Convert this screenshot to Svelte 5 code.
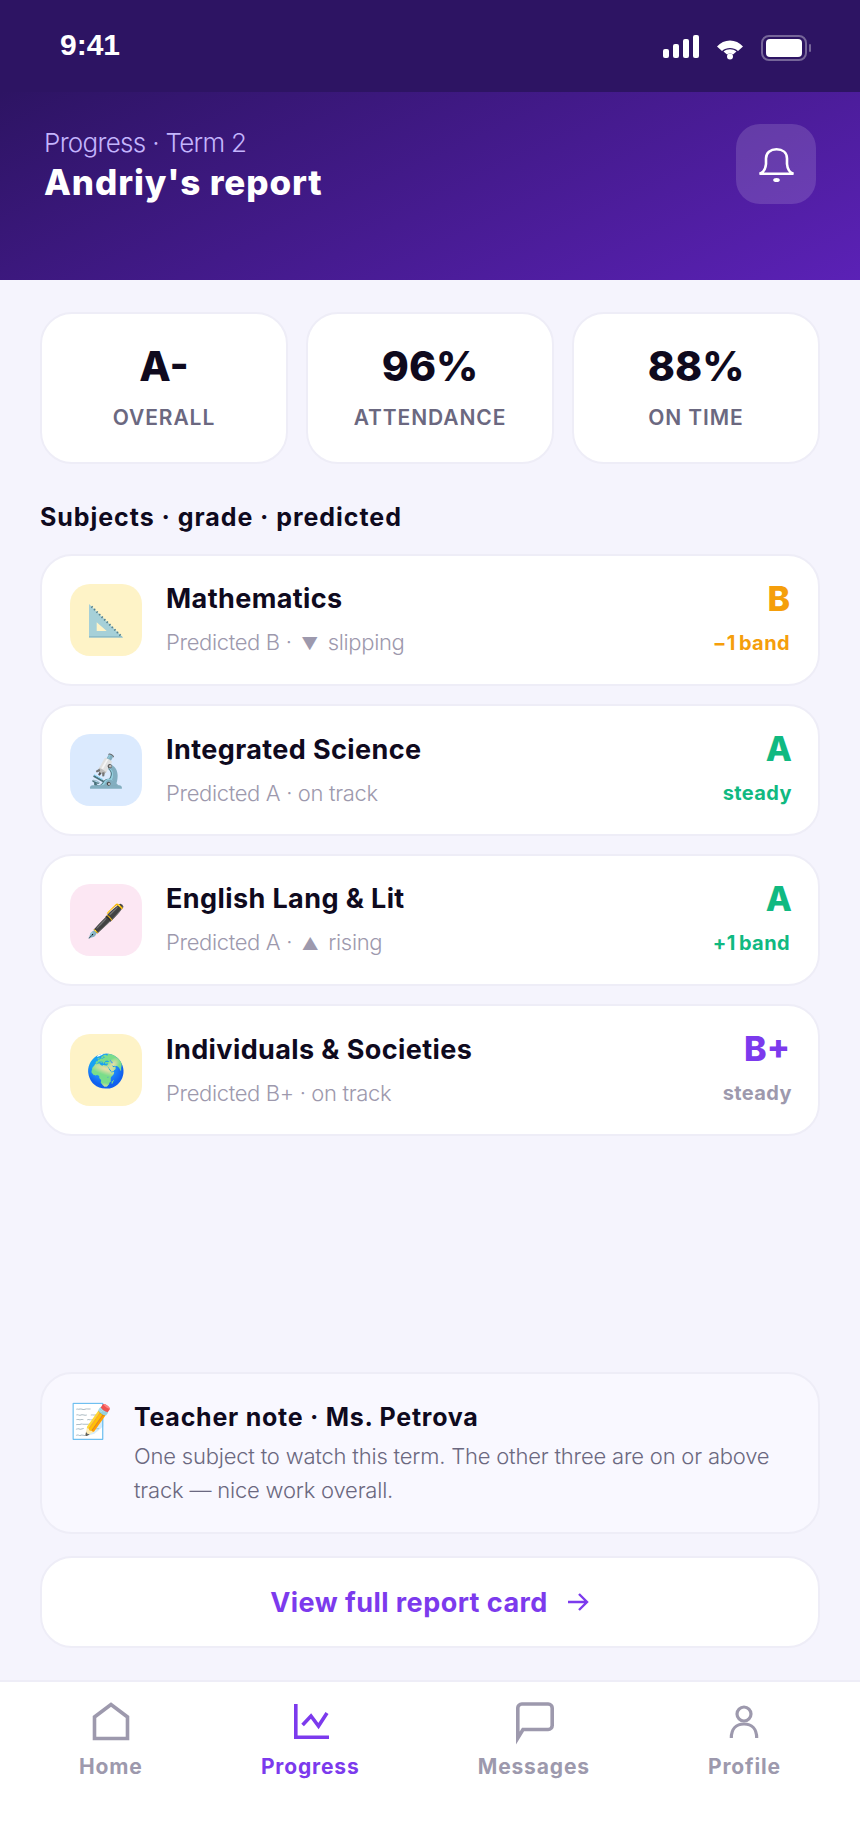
<script>
  const stats = [
    { value: 'A-', label: 'OVERALL' },
    { value: '96%', label: 'ATTENDANCE' },
    { value: '88%', label: 'ON TIME' }
  ];
  const subjects = [
    { icon: '', tint: 'yellow', name: 'Mathematics', sub: 'Predicted B · ', tri: '▼', rest: ' slipping', grade: 'B', delta: '−1 band', tone: 'amber' },
    { icon: '🔬', tint: 'blue', name: 'Integrated Science', sub: 'Predicted A · on track', grade: 'A', delta: 'steady', tone: 'green' },
    { icon: '🖋️', tint: 'pink', name: 'English Lang & Lit', sub: 'Predicted A · ', tri: '▲', rest: ' rising', grade: 'A', delta: '+1 band', tone: 'green' },
    { icon: '🌍', tint: 'yellow', name: 'Individuals & Societies', sub: 'Predicted B+ · on track', grade: 'B+', delta: 'steady', tone: 'purple' }
  ];
</script>

<div class="screen">
  <div class="status">
    <span class="time">9:41</span>
    <div class="status-icons">
      <svg width="36" height="24" viewBox="0 0 36 24" fill="#fff">
        <rect x="0" y="14" width="6" height="9" rx="2" />
        <rect x="10" y="9" width="6" height="14" rx="2" />
        <rect x="20" y="4" width="6" height="19" rx="2" />
        <rect x="30" y="0" width="6" height="23" rx="2" />
      </svg>
      <svg class="wifi" width="26" height="20" viewBox="0 0 26 20" fill="#fff">
        <path d="M0 6.500C3.500 2.500 8 .5 13 .5s9.500 2 13 6l-5 4.500C18.500 8.800 16 8 13 8s-5.500.8-8 3z" />
        <path d="M6.500 11.500C8.500 10 10.500 9.200 13 9.200s4.500.8 6.500 2.300L16 14.500c-1-.6-2-.9-3-.9s-2 .3-3 .9z" />
        <circle cx="13" cy="16.500" r="3" />
      </svg>
      <svg class="battery" width="51" height="26" viewBox="0 0 51 26">
        <rect x="1" y="1" width="44" height="24" rx="7" fill="none" stroke="#fff" stroke-opacity=".35" stroke-width="2" />
        <rect x="5" y="4" width="36" height="18" rx="4" fill="#fff" />
        <rect x="48" y="9" width="2" height="8" rx="1" fill="#fff" fill-opacity=".35" />
      </svg>
    </div>
  </div>

  <header class="hero">
    <div>
      <p class="eyebrow">Progress · Term 2</p>
      <h1>Andriy's report</h1>
    </div>
    <button class="bell" aria-label="Notifications">
      <svg width="40" height="40" viewBox="0 0 40 40" fill="none" stroke="#fff" stroke-width="2.600">
        <path d="M3.500 29.700C7.500 28.500 9.500 26 10 20V14.500C10 8.500 14.500 5.300 20.500 5.300S31 8.500 31 14.500V20C31.500 26 33.500 28.500 37.500 29.700Z" />
        <ellipse cx="20.500" cy="36" rx="2" ry="0.800" fill="#fff" />
      </svg>
    </button>
  </header>

  <main class="content">
    <section class="stats">
      {#each stats as s}
        <div class="stat">
          <div class="stat-value">{s.value}</div>
          <div class="stat-label">{s.label}</div>
        </div>
      {/each}
    </section>

    <h2>Subjects · grade · predicted</h2>

    <section class="list">
      {#each subjects as s}
        <article class="subject">
          <div class="tile {s.tint}">
            {#if s.icon}
              {s.icon}
            {:else}
              <svg width="40" height="40" viewBox="0 0 40 40">
                <path fill="#a6d0d8" fill-rule="evenodd" d="M3 4l34 33.500H3zM10.700 22.300V31h10z" />
                <path fill="#8dbcc8" d="M3 36h32.500l1.500 1.500H3z" />
                <path d="M5.500 6.500L35 36" fill="none" stroke="#55808e" stroke-width="2" stroke-dasharray="1.400 2.200" />
              </svg>
            {/if}
          </div>
          <div class="info">
            <div class="name">{s.name}</div>
            <div class="sub">{s.sub}{#if s.tri}<span class="tri">{s.tri}</span>{s.rest}{/if}</div>
          </div>
          <div class="result">
            <div class="grade {s.tone} {s.grade === 'A' ? 'nudge' : ''}">{s.grade}</div>
            <div class="delta {s.tone === 'purple' ? 'muted' : s.tone} {s.delta === 'steady' ? 'nudge' : ''}">{s.delta}</div>
          </div>
        </article>
      {/each}
    </section>

    <section class="note">
      <div class="note-icon">📝</div>
      <div>
        <div class="note-title">Teacher note · Ms. Petrova</div>
        <p>One subject to watch this term. The other three are on or above track — nice work overall.</p>
      </div>
    </section>

    <button class="cta">
      <span>View full report card</span>
      <svg width="24" height="24" viewBox="0 0 24 24" fill="none" stroke="#7c3aed" stroke-width="2.400">
        <path d="M2 12h19M13 4l8 8-8 8" />
      </svg>
    </button>
  </main>

  <nav class="tabs">
    <div class="tab">
      <svg width="44" height="44" viewBox="0 0 44 44" fill="none" stroke="currentColor" stroke-width="3.600">
        <path d="M5.500 36.500V15L22 2.500 38.500 15v21.500z" />
      </svg>
      <span>Home</span>
    </div>
    <div class="tab active">
      <svg width="44" height="44" viewBox="0 0 44 44" fill="none" stroke="currentColor" stroke-width="3.600">
        <path d="M7.800 2v33.200H41" />
        <path d="M14.600 23l8.400-9 7.500 10L39 11" />
      </svg>
      <span>Progress</span>
    </div>
    <div class="tab">
      <svg width="44" height="44" viewBox="0 0 44 44" fill="none" stroke="currentColor" stroke-width="3.600">
        <path d="M5.800 36V6a4 4 0 0 1 4-4h26.400a4 4 0 0 1 4 4v17.500a4 4 0 0 1-4 4H11z" />
      </svg>
      <span>Messages</span>
    </div>
    <div class="tab">
      <svg width="44" height="44" viewBox="0 0 44 44" fill="none" stroke="currentColor" stroke-width="3.200">
        <circle cx="22" cy="12" r="7" />
        <path d="M9.300 36c0-9 5-14 12.700-14s12.700 5 12.700 14" />
      </svg>
      <span>Profile</span>
    </div>
  </nav>
</div>

<style>
  :global(body) {
    margin: 0;
    background: #f5f4fd;
  }
  .screen {
    width: 860px;
    height: 1824px;
    display: flex;
    flex-direction: column;
    font-family: Inter, "Noto Color Emoji", sans-serif;
    background: #f5f4fd;
    color: #0f0a1e;
  }
  .status {
    height: 92px;
    box-sizing: border-box;
    padding: 0 48px 0 60px;
    display: flex;
    align-items: center;
    justify-content: space-between;
    background: #2d1463;
    color: #fff;
  }
  .time {
    font: 700 30px "Liberation Sans", sans-serif;
    margin-top: -2px;
  }
  .status-icons {
    display: flex;
    align-items: flex-start;
    margin-top: 3px;
  }
  .wifi {
    margin: 5px 0 0 18px;
  }
  .battery {
    margin-left: 18px;
  }
  .hero {
    height: 188px;
    box-sizing: border-box;
    padding: 32px 44px 0;
    display: flex;
    justify-content: space-between;
    align-items: flex-start;
    background: linear-gradient(155deg, #2d1463 0%, #5b21b6 100%);
  }
  .eyebrow {
    margin: 0;
    font-size: 26px;
    font-weight: 300;
    line-height: 38px;
    color: #c4b5fd;
    letter-spacing: -0.7px;
  }
  h1 {
    margin: 0;
    font-size: 35px;
    font-weight: 800;
    line-height: 40px;
    letter-spacing: 0.9px;
    color: #fff;
  }
  .bell {
    width: 80px;
    height: 80px;
    padding: 0;
    border: 0;
    border-radius: 24px;
    display: flex;
    align-items: center;
    justify-content: center;
    background: rgba(255, 255, 255, 0.14);
  }
  .content {
    flex: 1;
    display: flex;
    flex-direction: column;
    padding: 32px 40px 32px;
  }
  .stats {
    display: grid;
    grid-template-columns: repeat(3, 1fr);
    gap: 18px;
  }
  .stat {
    height: 152px;
    box-sizing: border-box;
    padding-top: 28px;
    text-align: center;
    background: #fff;
    border: 2px solid #eeedf7;
    border-radius: 32px;
  }
  .stat-value {
    font-size: 41px;
    font-weight: 800;
    line-height: 48px;
  }
  .stat-label {
    margin-top: 14px;
    font-size: 21px;
    font-weight: 600;
    line-height: 28px;
    letter-spacing: 0.9px;
    color: #6b6880;
  }
  h2 {
    margin: 38px 0 0;
    font-size: 25px;
    font-weight: 700;
    line-height: 30px;
    letter-spacing: 0.95px;
  }
  .list {
    margin-top: 22px;
    display: flex;
    flex-direction: column;
    gap: 18px;
  }
  .subject {
    height: 132px;
    box-sizing: border-box;
    padding: 0 28px;
    display: flex;
    align-items: center;
    background: #fff;
    border: 2px solid #eeedf7;
    border-radius: 32px;
  }
  .tile {
    width: 72px;
    height: 72px;
    flex: none;
    display: flex;
    align-items: center;
    justify-content: center;
    border-radius: 20px;
    font-size: 32px;
  }
  .yellow { background: #fef3c7; }
  .blue { background: #dbeafe; }
  .pink { background: #fce7f3; }
  .info {
    flex: 1;
    margin-left: 24px;
  }
  .name {
    font-size: 27px;
    font-weight: 700;
    line-height: 34px;
    letter-spacing: 0.4px;
  }
  .sub {
    margin-top: 11px;
    font-size: 22px;
    font-weight: 300;
    line-height: 30px;
    letter-spacing: -0.35px;
    color: #9d99ad;
  }
  .tri {
    font-size: 17px;
    margin: 0 4px;
  }
  .result {
    text-align: right;
    margin-bottom: 2px;
  }
  .grade {
    font-size: 34px;
    font-weight: 800;
    line-height: 36px;
  }
  .delta {
    margin-top: 12px;
    font-size: 20px;
    font-weight: 700;
    line-height: 28px;
    letter-spacing: 0.4px;
    word-spacing: -2px;
  }
  .nudge { margin-right: -2px; }
  .amber { color: #f59e0b; }
  .green { color: #10b981; }
  .purple { color: #7c3aed; }
  .muted { color: #9d99ad; }
  .note {
    margin-top: auto;
    height: 162px;
    box-sizing: border-box;
    padding: 27px 28px 0;
    display: flex;
    gap: 18px;
    background: #f9f8ff;
    border: 2px solid #eeedf7;
    border-radius: 32px;
  }
  .note-icon {
    width: 46px;
    flex: none;
    font-size: 34px;
    line-height: 40px;
  }
  .note-title {
    font-size: 25px;
    font-weight: 700;
    line-height: 32px;
    letter-spacing: 0.75px;
  }
  .note p {
    margin: 6px 0 0;
    font-size: 22px;
    font-weight: 300;
    line-height: 34px;
    letter-spacing: -0.2px;
    color: #6b6880;
  }
  .cta {
    margin-top: 22px;
    height: 92px;
    flex: none;
    display: flex;
    align-items: center;
    justify-content: center;
    gap: 18px;
    padding-right: 6px;
    background: #fff;
    border: 2px solid #eeedf7;
    border-radius: 32px;
    font: 700 27px Inter, sans-serif;
    letter-spacing: 0.45px;
    color: #7c3aed;
  }
  .tabs {
    height: 144px;
    box-sizing: border-box;
    padding: 20px 20px 0;
    display: flex;
    justify-content: space-around;
    align-items: flex-start;
    background: #fff;
    border-top: 2px solid #eeedf7;
  }
  .tab {
    display: flex;
    flex-direction: column;
    align-items: center;
    gap: 8px;
    color: #9d99ad;
    font-size: 21px;
    font-weight: 700;
    letter-spacing: 0.85px;
  }
  .active {
    color: #7c3aed;
  }
</style>
